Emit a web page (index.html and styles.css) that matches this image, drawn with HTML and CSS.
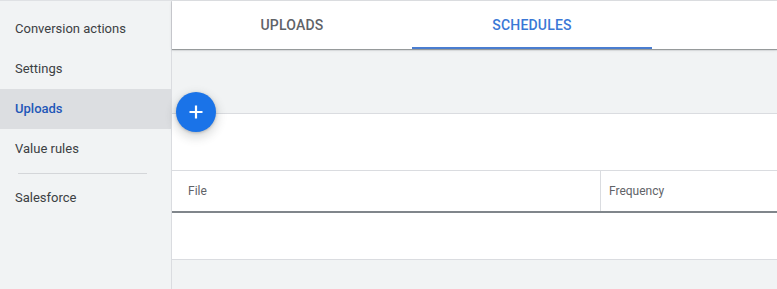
FILE: index.html
```html
<!DOCTYPE html>
<html>
<head>
<meta charset="utf-8">
<link rel="stylesheet" href="styles.css">
</head>
<body>
<div class="app">
  <nav class="sidebar">
    <div class="nav-item">Conversion actions</div>
    <div class="nav-item">Settings</div>
    <div class="nav-item active">Uploads</div>
    <div class="nav-item">Value rules</div>
    <div class="nav-divider"></div>
    <div class="nav-item">Salesforce</div>
  </nav>
  <main class="main">
    <div class="tabbar">
      <div class="tab">UPLOADS</div>
      <div class="tab selected">SCHEDULES</div>
    </div>
    <button class="fab" aria-label="Add">
      <svg width="16" height="16" viewBox="0 0 16 16"><path d="M8 1.5v13M1.5 8h13" stroke="#fff" stroke-width="2.2" fill="none"/></svg>
    </button>
    <section class="card">
      <div class="toolbar"></div>
      <div class="thead">
        <div class="th th-file">File</div>
        <div class="th th-freq">Frequency</div>
      </div>
      <div class="trow"></div>
    </section>
  </main>
</div>
</body>
</html>
```
FILE: styles.css
```css
* { box-sizing: border-box; }
html, body { margin: 0; padding: 0; }
body {
  font-family: Roboto, "Noto Sans", "Liberation Sans", sans-serif;
  background: #f1f3f4;
  overflow: hidden;
}
.app {
  display: flex;
  height: 289px;
  border-top: 1px solid #dfe1e4;
}
.sidebar {
  width: 172px;
  flex: none;
  background: #f1f3f4;
  border-right: 1px solid #dadce0;
  padding-top: 8px;
}
.nav-item {
  height: 40px;
  line-height: 40px;
  padding-left: 15px;
  font-size: 13px;
  color: #3c4043;
}
.nav-item.active {
  background: #dcdee1;
  color: #1f57b8;
  font-weight: 500;
}
.nav-divider {
  height: 1px;
  background: #d4d6d9;
  margin: 4px 24px 4px 18px;
}
.main {
  flex: 1;
  position: relative;
  background: #f1f3f4;
}
.tabbar {
  height: 48px;
  background: #fff;
  display: flex;
  box-shadow: 0 1px 1px rgba(60, 64, 67, 0.45), 0 1px 3px rgba(60, 64, 67, 0.15);
  position: relative;
  z-index: 1;
}
.tab {
  width: 240px;
  display: flex;
  align-items: center;
  justify-content: center;
  font-size: 14px;
  font-weight: 500;
  color: #5f6368;
  letter-spacing: 0.2px;
  border-bottom: 2px solid transparent;
  padding-top: 2px;
}
.tab.selected {
  color: #3a78d6;
  border-bottom-color: #4a7dd0;
}
.fab {
  position: absolute;
  left: 4px;
  top: 91px;
  width: 40px;
  height: 40px;
  border-radius: 50%;
  border: none;
  padding: 0;
  background: #1a73e8;
  display: flex;
  align-items: center;
  justify-content: center;
  box-shadow: 0 1px 3px rgba(60, 64, 67, 0.3), 0 4px 8px 3px rgba(60, 64, 67, 0.15);
  z-index: 2;
}
.card {
  margin-top: 64px;
  background: #fff;
  border-top: 1px solid #dadce0;
  border-bottom: 1px solid #dadce0;
}
.toolbar {
  height: 57px;
  border-bottom: 1px solid #dadce0;
}
.thead {
  display: flex;
  height: 42px;
  border-bottom: 2px solid #80868b;
}
.th {
  display: flex;
  align-items: center;
  font-size: 12px;
  color: #5f6368;
}
.th-file {
  width: 428px;
  padding-left: 16px;
}
.th-freq {
  flex: 1;
  padding-left: 8px;
  border-left: 1px solid #dadce0;
}
.trow {
  height: 46px;
}
```
